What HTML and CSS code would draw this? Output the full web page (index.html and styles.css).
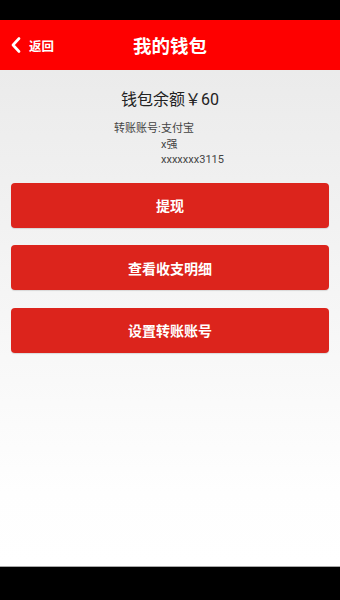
FILE: index.html
```html
<!DOCTYPE html>
<html lang="zh">
<head>
<meta charset="utf-8">
<link rel="stylesheet" href="styles.css">
</head>
<body>
<div class="phone">
  <div class="statusbar"></div>
  <header class="appbar">
    <a class="back">
      <svg class="chev" width="10" height="16" viewBox="0 0 10 16"><path d="M8 1.5 L2 8 L8 14.5" fill="none" stroke="#fff" stroke-width="2.6" stroke-linecap="round" stroke-linejoin="round"/></svg>
      <span>返回</span>
    </a>
    <h1 class="title">我的钱包</h1>
  </header>
  <main class="content">
    <div class="balance">钱包余额￥60</div>
    <div class="account">
      <div class="acc-label">转账账号:</div>
      <div class="acc-lines">
        <div>支付宝</div>
        <div>x强</div>
        <div>xxxxxxx3115</div>
      </div>
    </div>
    <div class="buttons">
      <button class="btn">提现</button>
      <button class="btn">查看收支明细</button>
      <button class="btn">设置转账账号</button>
    </div>
  </main>
  <div class="navbar"></div>
</div>
</body>
</html>
```
FILE: styles.css
```css
* { box-sizing: border-box; }
html, body { margin: 0; padding: 0; }
body {
  width: 340px;
  height: 600px;
  font-family: "Roboto", "Noto Sans CJK SC", sans-serif;
  background: #000;
}
.phone {
  width: 340px;
  height: 600px;
  display: flex;
  flex-direction: column;
}
.statusbar {
  height: 20px;
  background: #000;
  flex: none;
}
.appbar {
  height: 50px;
  background: #fe0000;
  flex: none;
  display: flex;
  align-items: center;
  justify-content: center;
  position: relative;
  color: #fff;
}
.back {
  position: absolute;
  left: 11px;
  top: 0;
  height: 50px;
  display: flex;
  align-items: center;
  gap: 8px;
  font-size: 12.5px;
  font-weight: bold;
  color: #fff;
}
.chev { display: block; }
.title {
  margin: 0;
  font-size: 18.5px;
  font-weight: bold;
}
.content {
  flex: 1;
  background: linear-gradient(#ebebeb 0%, #fefefe 85%, #fff 100%);
  display: flex;
  flex-direction: column;
  border-bottom: 1px solid #a8a8a8;
}
.balance {
  margin-top: 20px;
  text-align: center;
  font-size: 16px;
  color: #222;
  line-height: 20px;
}
.account {
  margin-top: 11px;
  margin-left: 114px;
  display: flex;
  font-size: 11px;
  color: #444;
  line-height: 15.5px;
}
.acc-label { width: 47px; text-align: left; }
.buttons {
  margin-top: 15px;
  padding: 0 11px;
  display: flex;
  flex-direction: column;
  gap: 17.5px;
}
.btn {
  height: 45px;
  border: none;
  border-radius: 4px;
  background: #dc241c;
  color: #fff;
  font-family: "Noto Sans CJK SC", sans-serif;
  font-size: 14px;
  font-weight: bold;
  box-shadow: 0 1px 1px rgba(0,0,0,0.12);
}
.navbar {
  height: 33px;
  background: #000;
  flex: none;
}
```
